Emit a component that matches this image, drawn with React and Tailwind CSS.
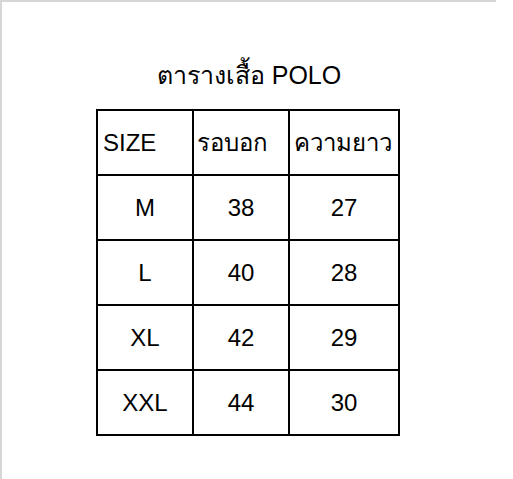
export default function App() {
  const rows = [
    ["M", "38", "27"],
    ["L", "40", "28"],
    ["XL", "42", "29"],
    ["XXL", "44", "30"],
  ];

  return (
    <div className="w-[513px] h-[479px] bg-white overflow-hidden">
      <div
        className="w-[496px] h-[479px] border-t-2 border-l-2 border-[#d6d6d6] text-black"
        style={{ fontFamily: '"Liberation Sans", "Noto Sans", sans-serif' }}
      >
        {/* Title */}
        <h1 className="mt-[55px] text-center text-[25px] leading-[36px]">
          ตารางเสื้อ POLO
        </h1>

        {/* Size table */}
        <table className="mt-[16px] ml-[94px] border-collapse text-[24px]">
          <thead>
            <tr className="h-[65px]">
              <th className="w-[96px] border-2 border-black text-left font-normal pl-[5px]">SIZE</th>
              <th className="w-[96px] border-2 border-black text-left font-normal pl-[3px]">รอบอก</th>
              <th className="w-[110px] border-2 border-black text-left font-normal pl-[4px]">ความยาว</th>
            </tr>
          </thead>
          <tbody>
            {rows.map((r) => (
              <tr key={r[0]} className="h-[65px]">
                {r.map((c, i) => (
                  <td key={i} className="border-2 border-black text-center">
                    {c}
                  </td>
                ))}
              </tr>
            ))}
          </tbody>
        </table>
      </div>
    </div>
  );
}
